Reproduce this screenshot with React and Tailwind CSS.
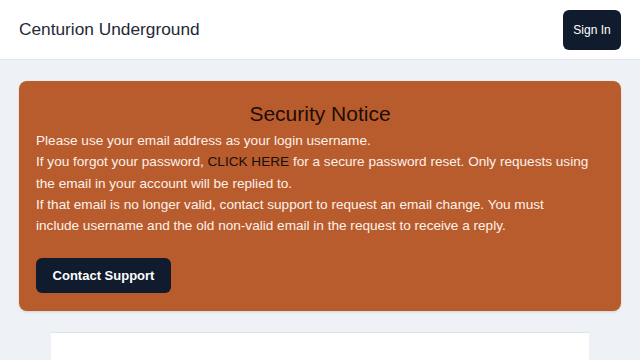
import React from 'react';

export default function App() {
  return (
    <div className="min-h-screen bg-[#eef2f7] text-[#111827]" style={{ fontFamily: '"Liberation Sans", Arial, sans-serif' }}>
      {/* Header */}
      <header className="h-[60px] bg-white border-b border-[#e2e5ea] flex items-center justify-between pl-[19px] pr-[19px]">
        <span className="text-[17.3px] text-[#1f2937]">Centurion Underground</span>
        <button className="h-10 w-[58px] rounded-md bg-[#111b2e] text-white text-[12px]">Sign In</button>
      </header>

      <main className="px-[19px] pt-[21px]">
        {/* Notice */}
        <section className="rounded-lg bg-[#b85c2e] pl-[17px] pr-[31px] pt-[19px] pb-[18px] shadow-sm">
          <h2 className="text-center text-[21px] leading-7 text-[#1e0d06] mb-[2px] pl-[14px]">Security Notice</h2>
          <div className="text-[13.6px] leading-[21.3px] text-[#fdf1ea]">
            <p>Please use your email address as your login username.</p>
            <p>
              If you forgot your password, <a className="text-[#1a0e08]">CLICK HERE</a> for a secure password reset. Only requests using the email in your account will be replied to.
            </p>
            <p>
              If that email is no longer valid, contact support to request an email change. You must include username and the old non-valid email in the request to receive a reply.
            </p>
          </div>
          <button className="mt-[22px] h-[35px] w-[135px] rounded-md bg-[#111b2e] text-white text-[13px] font-bold">Contact Support</button>
        </section>

        {/* Form area */}
        <div className="mx-[32px] mt-[21px] h-[60px] bg-white border-t border-[#dfe2e6]"></div>
      </main>
    </div>
  );
}
